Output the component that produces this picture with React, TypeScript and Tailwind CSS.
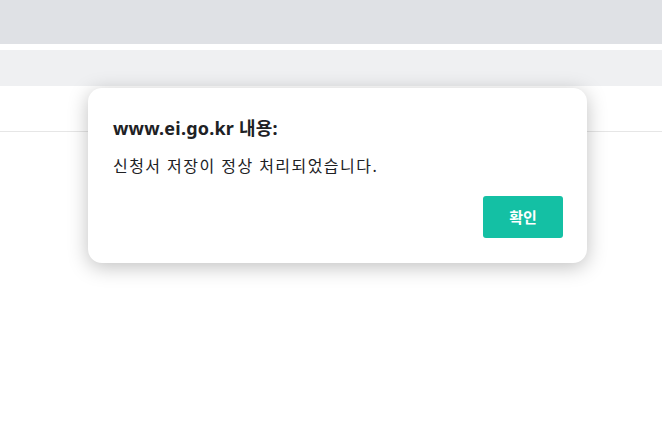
export default function App() {
  return (
    <div
      className="relative h-[446px] w-[662px] overflow-hidden bg-white"
      style={{ fontFamily: '"Noto Sans", "Noto Sans CJK KR", sans-serif' }}
    >
      <div className="h-[44px] bg-[#dfe1e5]" />
      <div className="mt-[6px] h-[36px] bg-[#eff0f2]" />
      <div className="mt-[45px] h-px bg-[#e6e6e6]" />

      <div className="absolute left-[88px] top-[88px] h-[175px] w-[499px] rounded-[14px] bg-white px-[25px] pt-[27px] shadow-[0_4px_20px_rgba(0,0,0,0.25)]">
        <h1 className="text-[18px] font-bold leading-[26px] tracking-[0.2px] text-[#202124]">www.ei.go.kr 내용:</h1>
        <p className="mt-[13px] text-[16px] leading-[24px] tracking-[1.45px] text-[#202124]">
          신청서 저장이 정상 처리되었습니다.
        </p>
        <div className="mt-[18px] flex justify-end">
          <button className="mr-[-1px] h-[42px] w-[80px] rounded-[3px] bg-[#14c0a4] text-[15px] font-bold text-white">
            확인
          </button>
        </div>
      </div>
    </div>
  )
}
